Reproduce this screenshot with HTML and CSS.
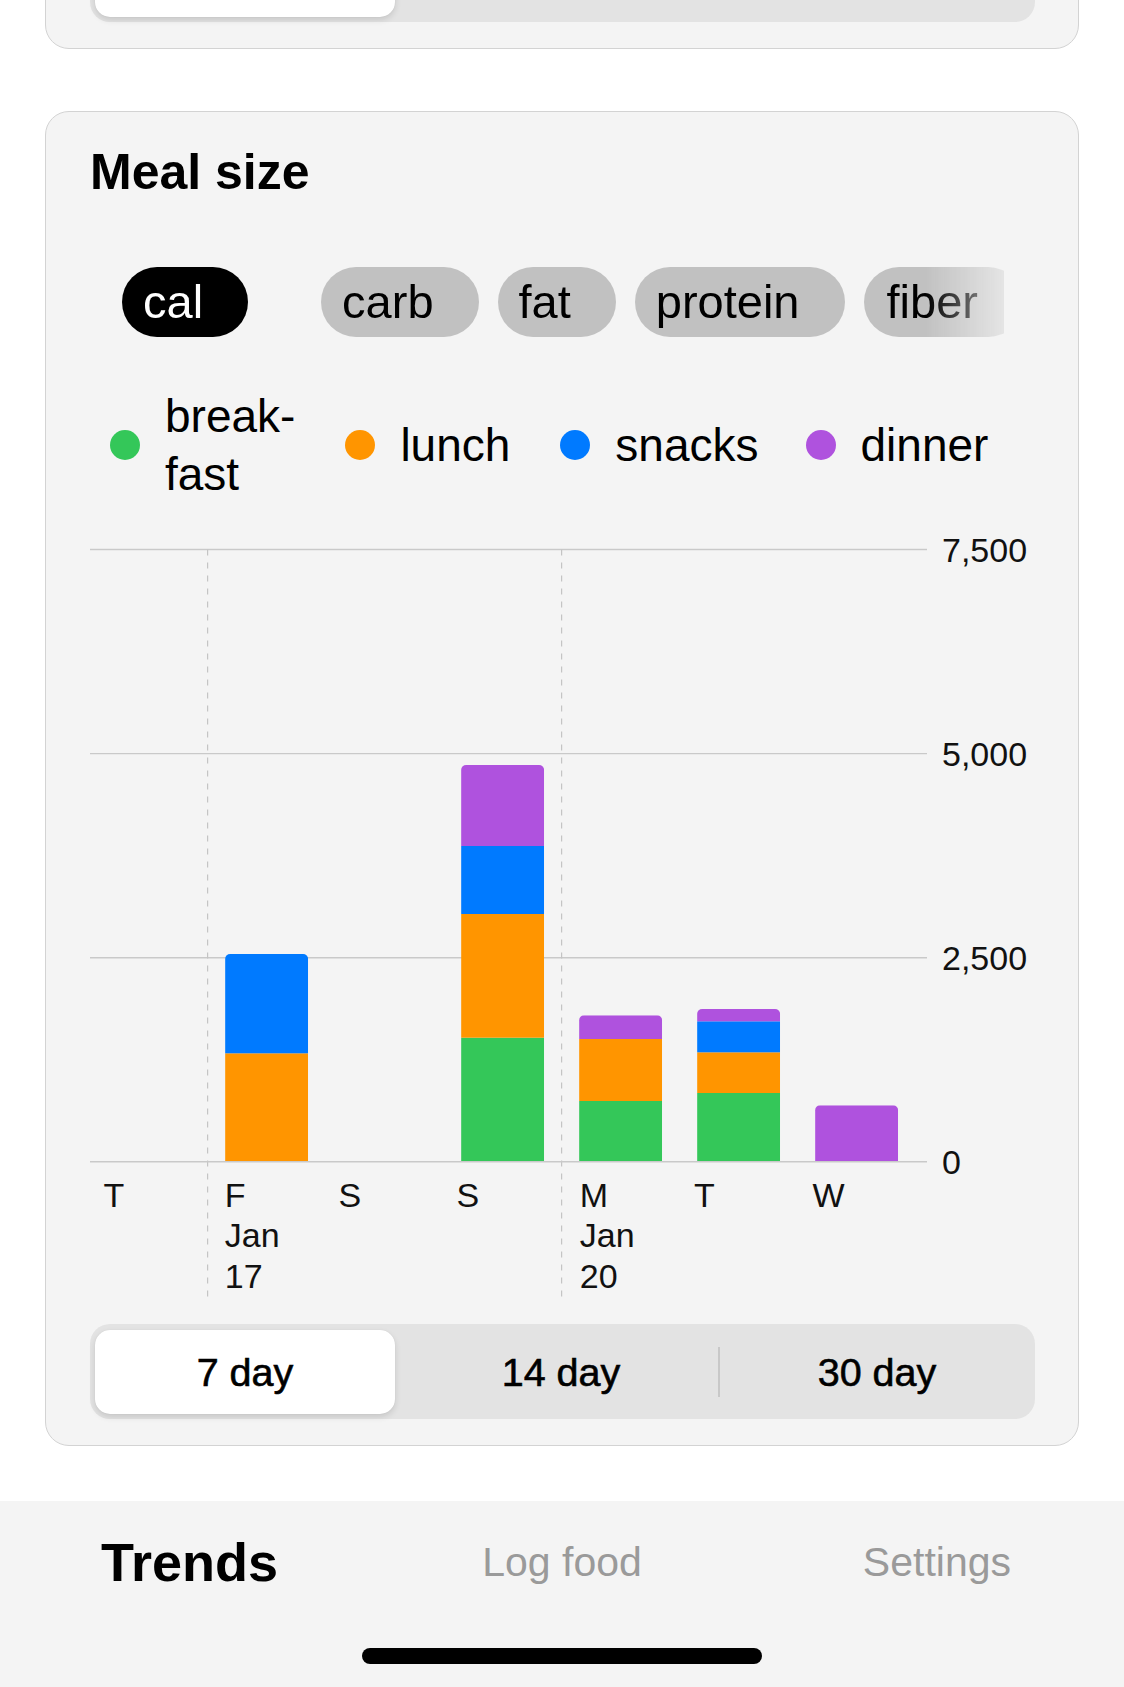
FILE: index.html
```html
<!DOCTYPE html>
<html lang="en">
<head>
<meta charset="utf-8">
<title>Trends</title>
<link rel="stylesheet" href="styles.css">
</head>
<body>
<div class="screen">
  <main class="scroll">
    <section class="card card-top">
      <div class="seg">
        <div class="seg-item is-active"></div>
        <div class="seg-item"></div>
        <div class="seg-item has-sep"></div>
      </div>
    </section>

    <section class="card">
      <h2 class="card-title">Meal size</h2>

      <div class="chips">
        <span class="chip is-active">cal</span>
        <span class="chip">carb</span>
        <span class="chip">fat</span>
        <span class="chip">protein</span>
        <span class="chip">fiber</span>
      </div>

      <div class="legend">
        <div class="legend-item"><span class="dot dot-green"></span><span class="legend-label wrap">break-fast</span></div>
        <div class="legend-item"><span class="dot dot-orange"></span><span class="legend-label">lunch</span></div>
        <div class="legend-item"><span class="dot dot-blue"></span><span class="legend-label">snacks</span></div>
        <div class="legend-item"><span class="dot dot-purple"></span><span class="legend-label">dinner</span></div>
      </div>

      <svg class="chart" width="945" height="790" viewBox="0 0 945 790">
        <defs>
          <clipPath id="cF"><rect x="135.1" y="434" width="83" height="220" rx="5"/></clipPath>
          <clipPath id="cSu"><rect x="371.1" y="245" width="83" height="410" rx="5"/></clipPath>
          <clipPath id="cM"><rect x="489.1" y="495.3" width="83" height="160" rx="5"/></clipPath>
          <clipPath id="cT"><rect x="607.1" y="489" width="83" height="165" rx="5"/></clipPath>
          <clipPath id="cW"><rect x="725.1" y="585.3" width="83" height="70" rx="5"/></clipPath>
        </defs>

        <g class="grid">
          <line x1="0" y1="29.5" x2="837" y2="29.5"/>
          <line x1="0" y1="233.6" x2="837" y2="233.6"/>
          <line x1="0" y1="437.7" x2="837" y2="437.7"/>
        </g>
        <g class="vdash">
          <line x1="117.6" y1="29.5" x2="117.6" y2="779"/>
          <line x1="471.6" y1="29.5" x2="471.6" y2="779"/>
        </g>

        <g clip-path="url(#cF)">
          <rect class="c-orange" x="135.1" y="533.3" width="83" height="108.5"/>
          <rect class="c-blue" x="135.1" y="434" width="83" height="99.3"/>
        </g>
        <g clip-path="url(#cSu)">
          <rect class="c-green" x="371.1" y="517.7" width="83" height="124.1"/>
          <rect class="c-orange" x="371.1" y="394" width="83" height="123.7"/>
          <rect class="c-blue" x="371.1" y="326" width="83" height="68"/>
          <rect class="c-purple" x="371.1" y="245" width="83" height="81"/>
        </g>
        <g clip-path="url(#cM)">
          <rect class="c-green" x="489.1" y="581" width="83" height="60.8"/>
          <rect class="c-orange" x="489.1" y="519" width="83" height="62"/>
          <rect class="c-purple" x="489.1" y="495.3" width="83" height="23.7"/>
        </g>
        <g clip-path="url(#cT)">
          <rect class="c-green" x="607.1" y="573" width="83" height="68.8"/>
          <rect class="c-orange" x="607.1" y="532.3" width="83" height="40.7"/>
          <rect class="c-blue" x="607.1" y="501.3" width="83" height="31"/>
          <rect class="c-purple" x="607.1" y="489" width="83" height="12.3"/>
        </g>
        <g clip-path="url(#cW)">
          <rect class="c-purple" x="725.1" y="585.3" width="83" height="56.5"/>
        </g>

        <g class="grid">
          <line x1="0" y1="641.8" x2="837" y2="641.8"/>
        </g>

        <g class="axis">
          <text x="852" y="41.6">7,500</text>
          <text x="852" y="245.7">5,000</text>
          <text x="852" y="449.8">2,500</text>
          <text x="852" y="653.9">0</text>
        </g>

        <g class="axis">
          <text x="13.6" y="686.7">T</text>
          <text x="134.8" y="686.7"><tspan x="134.8" y="686.7">F</tspan><tspan x="134.8" y="727.2">Jan</tspan><tspan x="134.8" y="767.7">17</tspan></text>
          <text x="248.6" y="686.7">S</text>
          <text x="366.6" y="686.7">S</text>
          <text x="489.8" y="686.7"><tspan x="489.8" y="686.7">M</tspan><tspan x="489.8" y="727.2">Jan</tspan><tspan x="489.8" y="767.7">20</tspan></text>
          <text x="604.1" y="686.7">T</text>
          <text x="722.6" y="686.7">W</text>
        </g>
      </svg>

      <div class="seg">
        <div class="seg-item is-active">7 day</div>
        <div class="seg-item">14 day</div>
        <div class="seg-item has-sep">30 day</div>
      </div>
    </section>
  </main>

  <nav class="tabbar">
    <div class="tabs">
      <span class="tab tab-left is-active">Trends</span>
      <span class="tab">Log food</span>
      <span class="tab tab-right">Settings</span>
    </div>
    <div class="home-indicator"></div>
  </nav>
</div>
</body>
</html>
```

FILE: styles.css
```css
* {
  box-sizing: border-box;
}

html, body {
  margin: 0;
  padding: 0;
  background: #ffffff;
}

body {
  font-family: "Liberation Sans", Arial, sans-serif;
  color: #000;
}

.screen {
  width: 1124px;
  height: 1687px;
  display: flex;
  flex-direction: column;
  overflow: hidden;
}

.scroll {
  flex: 1;
  overflow: hidden;
  padding: 0 45px;
}

.card {
  background: #f4f4f4;
  border: 1px solid #d3d3d3;
  border-radius: 24px;
  padding: 30px 43px 26px 44px;
  margin-top: 62px;
}

.card-top {
  margin-top: -104px;
}

.card-title {
  margin: 0;
  font-size: 50px;
  line-height: 60px;
  font-weight: 700;
  letter-spacing: 0;
}

/* metric chips */
.chips {
  margin: 65px 31px 0 0;
  padding-left: 32px;
  height: 70px;
  display: flex;
  gap: 19px;
  overflow: hidden;
  white-space: nowrap;
  -webkit-mask-image: linear-gradient(to right, #000 0, #000 calc(100% - 78px), rgba(0,0,0,0.3) 100%);
  mask-image: linear-gradient(to right, #000 0, #000 calc(100% - 78px), rgba(0,0,0,0.3) 100%);
}

.chip {
  flex: none;
  height: 70px;
  line-height: 70px;
  font-size: 47px;
  padding: 0 45px 0 21px;
  border-radius: 35px;
  background: #c1c1c1;
  color: #000;
}

.chip.is-active {
  background: #000;
  color: #fff;
  margin-right: 54px;
}

.chip:last-child {
  padding-left: 23px;
}

/* legend */
.legend {
  margin-top: 50px;
  padding-left: 20px;
  display: flex;
  align-items: center;
  gap: 50px;
  min-height: 116px;
}

.legend-item {
  display: flex;
  align-items: center;
  gap: 25px;
}

.legend-item:last-child {
  margin-left: -3px;
}

.dot {
  width: 30px;
  height: 30px;
  border-radius: 50%;
  flex: none;
}

.dot-green { background: #34c759; }
.dot-orange { background: #ff9500; }
.dot-blue { background: #007aff; }
.dot-purple { background: #af52de; }

.legend-label {
  font-size: 46px;
  line-height: 58px;
}

.legend-label.wrap {
  width: min-content;
}

/* chart */
.chart {
  display: block;
  margin-top: 17px;
  overflow: visible;
}

.grid line {
  stroke: #c9c9c9;
  stroke-width: 1.4;
}

.vdash line {
  stroke: #c4c4c4;
  stroke-width: 1.2;
  stroke-dasharray: 6 7;
}

.c-green { fill: #34c759; }
.c-orange { fill: #ff9500; }
.c-blue { fill: #007aff; }
.c-purple { fill: #af52de; }

.axis text {
  font-family: "Liberation Sans", Arial, sans-serif;
  font-size: 34px;
  fill: #111;
}

/* segmented control */
.seg {
  margin-top: 14px;
  height: 95px;
  padding: 6px 0 5px 5px;
  background: #e3e3e3;
  border-radius: 20px;
  display: grid;
  grid-template-columns: 1fr 316px 316px;
}

.card-top .seg {
  margin-top: 0;
}

.seg-item {
  position: relative;
  display: flex;
  align-items: center;
  justify-content: center;
  font-size: 39.5px;
  color: #000;
  -webkit-text-stroke: 0.6px #000;
}

.seg-item.is-active {
  background: #ffffff;
  border-radius: 15px;
  margin-right: 8px;
  box-shadow: 0 3px 6px rgba(0, 0, 0, 0.12), 0 0 1px rgba(0, 0, 0, 0.1);
}

.seg-item.has-sep::before {
  content: "";
  position: absolute;
  left: -1px;
  top: 17px;
  width: 2px;
  height: 50px;
  background: #c8c8c8;
}

/* tab bar */
.tabbar {
  flex: none;
  height: 186px;
  background: #f4f4f4;
}

.tabs {
  height: 122px;
  display: grid;
  grid-template-columns: 1fr auto 1fr;
  align-items: center;
}

.tab {
  font-size: 41px;
  color: #9a9a9a;
  line-height: 60px;
}

.tab.is-active {
  font-size: 54px;
  font-weight: 700;
  color: #000;
}

.tab-left {
  justify-self: start;
  margin-left: 101px;
}

.tab-right {
  justify-self: end;
  margin-right: 113px;
}

.home-indicator {
  margin: 25px auto 0;
  width: 400px;
  height: 16px;
  border-radius: 8px;
  background: #000;
}
```
